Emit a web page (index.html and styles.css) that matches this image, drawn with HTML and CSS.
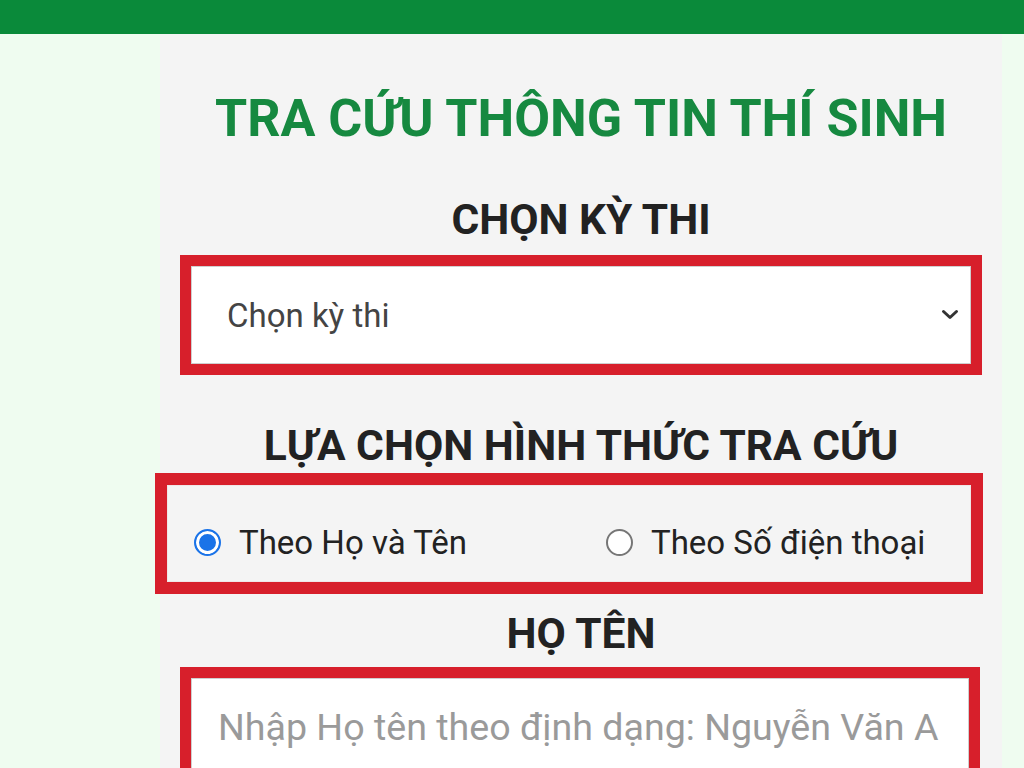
FILE: index.html
```html
<!DOCTYPE html>
<html lang="vi">
<head>
<meta charset="utf-8">
<title>Tra cứu thông tin thí sinh</title>
<link rel="stylesheet" href="styles.css">
</head>
<body>
<header class="topbar"></header>
<main class="page">
  <section class="card">
    <h1 class="title">TRA CỨU THÔNG TIN THÍ SINH</h1>

    <h2 class="label label-exam">CHỌN KỲ THI</h2>
    <div class="mark mark-exam">
      <div class="select-wrap">
        <select class="select">
          <option>Chọn kỳ thi</option>
        </select>
        <svg class="chevron" viewBox="0 0 18 11" width="18" height="11" aria-hidden="true">
          <path d="M2.5 2.5 L9 8.5 L15.5 2.5" fill="none" stroke="#333" stroke-width="3" stroke-linecap="round" stroke-linejoin="round"/>
        </svg>
      </div>
    </div>

    <h2 class="label label-mode">LỰA CHỌN HÌNH THỨC TRA CỨU</h2>
    <div class="mark mark-mode">
      <div class="radios">
        <label class="option"><input class="radio" type="radio" name="mode" checked><span>Theo Họ và Tên</span></label>
        <label class="option"><input class="radio" type="radio" name="mode"><span>Theo Số điện thoại</span></label>
      </div>
    </div>

    <h2 class="label label-name">HỌ TÊN</h2>
    <div class="mark mark-name">
      <input class="text-input" type="text" placeholder="Nhập Họ tên theo định dạng: Nguyễn Văn A">
    </div>
  </section>
</main>
</body>
</html>
```

FILE: styles.css
```css
* { box-sizing: border-box; }

html, body {
  margin: 0;
  padding: 0;
}

body {
  background: #effcf0;
  font-family: Roboto, "Noto Sans", "Liberation Sans", sans-serif;
  color: #222;
  overflow: hidden;
  height: 768px;
}

.topbar {
  height: 34px;
  background: #0a8a3a;
}

.page {
  display: flex;
  padding-left: 160px;
  padding-right: 22px;
}

.card {
  flex: 1;
  background: #f4f4f4;
  padding-top: 55px;
  min-height: 734px;
  display: flex;
  flex-direction: column;
}

.title {
  margin: 0;
  text-align: center;
  font-size: 52px;
  line-height: 60px;
  font-weight: 700;
  color: #168940;
}

.label {
  margin: 0;
  text-align: center;
  font-size: 42.5px;
  line-height: 50px;
  font-weight: 700;
  color: #222;
}

.label-exam { margin-top: 46px; }
.label-mode { margin-top: 46px; }
.label-name { margin-top: 15px; }

.mark {
  border: 11px solid #d71f2b;
}

.mark-exam {
  margin: 10px 20px 0 20px;
}

.mark-mode {
  margin: 2px 19px 0 -5px;
  border-width: 12px;
}

.mark-name {
  margin: 8px 22px 0 20px;
}

.select-wrap {
  position: relative;
}

.select {
  display: block;
  width: 100%;
  height: 98px;
  appearance: none;
  -webkit-appearance: none;
  border: 1px solid #cfcfcf;
  border-radius: 0;
  background: #fff;
  font-family: Roboto, "Noto Sans", sans-serif;
  font-size: 33px;
  color: #444;
  padding: 0 0 0 35px;
  outline: none;
}

.chevron {
  position: absolute;
  right: 12px;
  top: 43px;
}

.radios {
  display: grid;
  grid-template-columns: 412px 1fr;
  align-items: center;
  height: 97px;
  padding-top: 18px;
  padding-left: 26px;
  border: 1px solid #efe6e6;
}

.option {
  display: flex;
  align-items: center;
  gap: 18px;
  font-size: 33px;
  color: #222;
}

.radio {
  appearance: none;
  -webkit-appearance: none;
  margin: 0;
  width: 27px;
  height: 27px;
  border-radius: 50%;
  border: 2px solid #767676;
  background: #fff;
  flex: none;
}

.radio:checked {
  border-color: #1a73e8;
  background: #1a73e8;
  box-shadow: inset 0 0 0 3px #fff;
}

.text-input {
  display: block;
  width: 100%;
  height: 98px;
  border: 1px solid #cfcfcf;
  background: #fff;
  font-family: Roboto, "Noto Sans", sans-serif;
  font-size: 37.6px;
  color: #333;
  padding: 0 0 0 26px;
  outline: none;
}

.text-input::placeholder {
  color: #9a9a9a;
}
```
